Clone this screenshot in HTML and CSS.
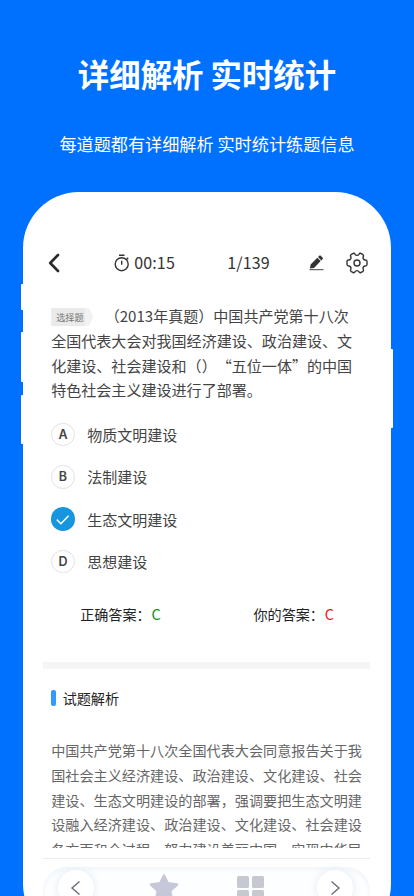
FILE: index.html
```html
<!DOCTYPE html>
<html lang="zh-CN">
<head>
<meta charset="utf-8">
<title>详细解析 实时统计</title>
<link rel="stylesheet" href="styles.css">
</head>
<body>
<main class="page">
  <h1 class="title">详细解析 实时统计</h1>
  <p class="subtitle">每道题都有详细解析 实时统计练题信息</p>
  <section class="phone">
    <i class="key key-mute"></i><i class="key key-up"></i><i class="key key-down"></i><i class="key key-power"></i>
    <div class="screen">
      <header class="bar">
        <svg class="back" width="12" height="20" viewBox="0 0 12 20"><path d="M10 2 2.2 10l7.800 8" fill="none" stroke="#2b2b2b" stroke-width="2.6" stroke-linecap="round" stroke-linejoin="round"/></svg>
        <svg class="clock" width="16" height="18" viewBox="0 0 16 18" fill="none" stroke="#333" stroke-width="1.4"><circle cx="7.700" cy="10.200" r="6.500"/><path d="M5 1.200h5.500M7.700 6.800v4M12.700 3.700l1.500 1.500"/></svg>
        <span class="time">00:15</span>
        <span class="count">1/139</span>
        <svg class="pen" width="15" height="16" viewBox="0 0 15 16"><path d="M1 13.500 1.600 9.600 8.300 2.700 11.700 6.100 5 13ZM9 2 10.500.6Q11 .2 11.500.6L13.700 2.800Q14.100 3.300 13.700 3.900L12.400 5.400Z" fill="#333"/><path d="M.5 14.700h14" stroke="#444" stroke-width="1"/></svg>
        <svg class="gear" width="22" height="22" viewBox="0 0 22 22" fill="none" stroke="#333" stroke-width="1.400" stroke-linejoin="round"><path d="M7.300 1.300Q8.600 1 9 2.200Q9.600 3.400 11 3.400Q12.400 3.400 13 2.200Q13.400 1 14.700 1.300L17 2.700Q17.900 3.400 17.300 4.600Q16.700 6 17.400 7Q18.100 8 19.300 8Q20.900 8 21 9.300V12.500Q20.900 14 19.300 14Q18.100 14 17.400 15Q16.700 16 17.300 17.400Q17.900 18.600 17 19.300L14.700 20.700Q13.400 21 13 19.800Q12.400 18.600 11 18.600Q9.600 18.600 9 19.800Q8.600 21 7.300 20.700L5 19.300Q4.100 18.600 4.700 17.400Q5.300 16 4.600 15Q3.900 14 2.700 14Q1.100 14 1 12.500V9.300Q1.100 8 2.700 8Q3.900 8 4.600 7Q5.300 6 4.700 4.600Q4.100 3.400 5 2.700Z"/><circle cx="11" cy="11" r="3"/></svg>
      </header>
      <p class="question"><span class="tag">选择题</span>（2013年真题）中国共产党第十八次<br>全国代表大会对我国经济建设、政治建设、文<br>化建设、社会建设和（）“五位一体”的中国<br>特色社会主义建设进行了部署。</p>
      <ul class="options">
        <li><b class="mark">A</b>物质文明建设</li>
        <li><b class="mark">B</b>法制建设</li>
        <li><b class="mark mark-on"><svg width="23" height="23" viewBox="0 0 23 23"><path d="m5.800 11.600 4.100 4.100 7.700-8" fill="none" stroke="#fff" stroke-width="1.500"/></svg></b>生态文明建设</li>
        <li><b class="mark">D</b>思想建设</li>
      </ul>
      <div class="answers"><span>正确答案：<em class="right">C</em></span><span>你的答案：<em class="wrong">C</em></span></div>
      <hr class="divider">
      <h2 class="heading">试题解析</h2>
      <p class="analysis">中国共产党第十八次全国代表大会同意报告关于我<br>国社会主义经济建设、政治建设、文化建设、社会<br>建设、生态文明建设的部署，强调要把生态文明建<br>设融入经济建设、政治建设、文化建设、社会建设<br>各方面和全过程，努力建设美丽中国，实现中华民</p>
      <footer class="foot">
        <nav class="dock">
          <span class="round"><svg width="12" height="16" viewBox="0 0 12 16"><path d="M9.500 1.500 2 8l7.500 6.500" fill="none" stroke="#696b78" stroke-width="1.400"/></svg></span>
          <svg class="star" width="30" height="30" viewBox="0 0 30 30"><path d="m15 2.500 3.800 7.800 9.200 1.300-6.800 6.200 1.700 9.100-7.900-4.300L7.100 26.900l1.700-9.100L2 11.600l9.200-1.300Z" fill="#c6c7d8" stroke="#c6c7d8" stroke-width="2.500" stroke-linejoin="round"/></svg>
          <span class="tiles"><i></i><i></i><i></i><i></i></span>
          <span class="round"><svg width="12" height="16" viewBox="0 0 12 16"><path d="M2.500 1.500 10 8l-7.500 6.500" fill="none" stroke="#696b78" stroke-width="1.400"/></svg></span>
        </nav>
      </footer>
    </div>
  </section>
</main>
</body>
</html>
```
FILE: styles.css
```css
* { box-sizing: border-box; margin: 0; padding: 0; }
body {
  background: #0070ff;
  font-family: "Noto Sans CJK SC", sans-serif;
  text-spacing-trim: space-all;
  overflow: hidden;
}
.page { height: 896px; overflow: hidden; display: flex; flex-direction: column; }
.title {
  margin-top: 50px; height: 48px; line-height: 48px;
  text-align: center; white-space: nowrap;
  color: #fff; font-size: 31.400px; font-weight: 700;
}
.subtitle {
  margin-top: 33px; height: 26px; line-height: 26px;
  text-align: center; white-space: nowrap;
  color: #fff; font-size: 17.15px; font-weight: 400;
}
.phone {
  position: relative; flex: none;
  width: 368px; height: 748px; margin: 34.500px 0 0 22.700px;
  padding: 0 20.500px; background: #fff; border-radius: 56px;
}
.key { position: absolute; left: -2px; width: 4px; background: #fff; border-radius: 1px; }
.key-mute { top: 92.500px; height: 26px; }
.key-up { top: 140.500px; height: 50px; }
.key-down { top: 203.500px; height: 49px; }
.key-power { left: auto; right: -2.300px; top: 157px; height: 79px; }
.screen { display: flex; flex-direction: column; height: 704.500px; overflow: hidden; }

.bar { display: flex; align-items: center; height: 28px; margin-top: 57.500px; color: #333; font-size: 16px; line-height: 28px; }
.back { margin-left: 5px; }
.clock { margin-left: 54px; }
.time, .count { position: relative; top: -1px; letter-spacing: .15px; white-space: nowrap; }
.time { width: 42px; margin-left: 4px; }
.count { width: 43px; margin-left: 51px; }
.pen { margin-left: 39px; }
.gear { margin-left: 21.500px; flex: none; }

.question { margin: 27px 0 0 8px; color: #444; font-size: 15.050px; line-height: 24.800px; white-space: nowrap; }
.tag {
  display: inline-block; width: 42px; height: 18px; margin-right: 11.500px; padding-left: 5px;
  vertical-align: 1px; line-height: 18px; font-size: 9.200px; color: #777;
  background: linear-gradient(90deg, #eaeaea 82%, #f2f2f2 82%);
  clip-path: polygon(0 0, 90% 0, 100% 50%, 90% 100%, 0 100%);
}
.options { list-style: none; margin: 10px 0 0 8px; }
.options li { display: flex; align-items: center; gap: 12.500px; height: 42.400px; color: #444; font-size: 15px; }
.mark {
  display: flex; align-items: center; justify-content: center; width: 23.500px; height: 23.500px;
  padding-top: 1px; border: 1px solid #e2e2e2; border-radius: 50%;
  font: 600 12.500px/1 Inter, sans-serif; color: #444;
}
.mark-on { padding: 0; border: 0; background: #1795df; }

.answers { display: flex; margin: 19.500px 0 0 37px; height: 24px; line-height: 24px; color: #222; font-size: 14.100px; }
.answers span { flex: none; width: 173.300px; white-space: nowrap; }
.answers em { margin-left: .8px; font-style: normal; font-size: 14.500px; }
.right { color: #0a960a; }
.wrong { color: #f11; }
.divider { flex: none; height: 7.500px; margin-top: 35.300px; border: 0; background: #f5f5f5; }
.heading {
  display: flex; align-items: center; gap: 7px; margin: 18.500px 0 0 8px; height: 24px;
  color: #222; font-size: 14.100px; font-weight: 400;
}
.heading::before { content: ""; width: 4.500px; height: 16px; border-radius: 2px; background: #3398ff; }
.analysis {
  flex: none; height: 111px; margin: 29.500px 0 0 8px; overflow: hidden;
  color: #666; font-size: 14.130px; line-height: 24.750px; white-space: nowrap;
  padding-top: 1px;
}
.foot { flex: none; height: 50px; margin-top: 9.500px; padding-top: 8px; border-top: 1px solid #ececef; }
.dock {
  display: flex; align-items: flex-start; height: 60px; padding: 3px 15.500px 0 14.500px;
  border-radius: 24px; background: #fdfeff; box-shadow: inset 0 2px 5px #eef4f8;
}
.round {
  display: flex; align-items: center; justify-content: center; flex: none;
  width: 36px; height: 36px; border-radius: 50%; background: #fff; box-shadow: 0 0 10px #e0eaf2;
}
.star { margin: 3px 0 0 55px; }
.tiles { display: grid; grid-template-columns: 12px 12px; gap: 2.500px; margin: 6px 53.500px 0 58.500px; }
.tiles i { height: 12px; border-radius: 1.500px; background: #c6c8d2; }
```
